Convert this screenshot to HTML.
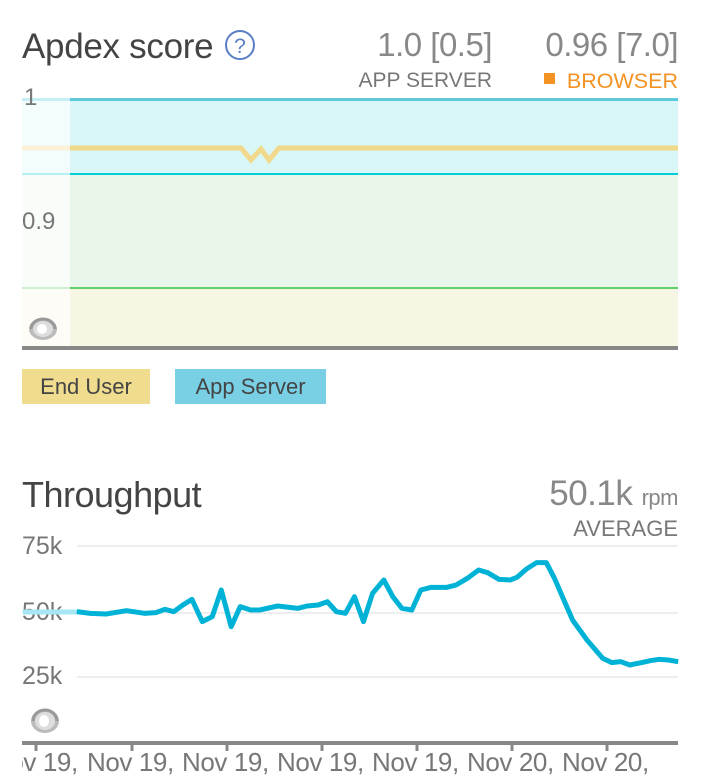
<!DOCTYPE html>
<html><head><meta charset="utf-8"><style>
body{margin:0;width:708px;height:778px;background:#fff;font-family:"Liberation Sans",sans-serif;position:relative;overflow:hidden}
.a{position:absolute;white-space:nowrap}
</style></head><body>
<div class="a" style="left:22px;top:27px;font-size:35px;color:#444;letter-spacing:-0.3px">Apdex score</div>
<svg class="a" style="left:223px;top:29px" width="34" height="34"><circle cx="17" cy="16" r="14" fill="none" stroke="#5a7fc5" stroke-width="2"/><text x="17" y="24" text-anchor="middle" font-size="21" fill="#5a7fc5" font-family="Liberation Sans">?</text></svg>
<div class="a" style="right:216px;top:26px;font-size:33px;color:#888;letter-spacing:-0.5px">1.0 [0.5]</div>
<div class="a" style="right:30px;top:26px;font-size:33px;color:#888;letter-spacing:-0.5px">0.96 [7.0]</div>
<div class="a" style="right:216px;top:69px;font-size:21px;color:#777">APP SERVER</div>
<div class="a" style="left:544px;top:73px;width:11px;height:11px;background:#f39324"></div>
<div class="a" style="right:30px;top:69px;font-size:21.5px;color:#f39324">BROWSER</div>

<div class="a" style="left:22px;top:99px;width:656px;height:75px;background:#d9f7f7"></div>
<div class="a" style="left:22px;top:174px;width:656px;height:114px;background:#e8f7ea"></div>
<div class="a" style="left:22px;top:288px;width:656px;height:60px;background:#f7f5e4"></div>
<div class="a" style="left:22px;top:97px;width:48px;height:251px;background:rgba(255,255,255,.7)"></div>
<div class="a" style="left:70px;top:98px;width:608px;height:3px;background:#5bc8dc"></div>
<div class="a" style="left:22px;top:98px;width:48px;height:3px;background:#c5eef5"></div>
<div class="a" style="left:70px;top:173px;width:608px;height:2px;background:#00cfd5"></div>
<div class="a" style="left:22px;top:173px;width:48px;height:2px;background:#b5f0f0"></div>
<div class="a" style="left:70px;top:287px;width:608px;height:2px;background:#5fd06a"></div>
<div class="a" style="left:22px;top:287px;width:48px;height:2px;background:#cdefd0"></div>
<div class="a" style="left:22px;top:346px;width:656px;height:4px;background:#888"></div>
<svg class="a" style="left:0;top:0" width="708" height="200"><polyline points="70,148 241,148 251,160 261,149 269,160 279,148 678,148" fill="none" stroke="#f0d98a" stroke-width="5"/><line x1="22" y1="148" x2="70" y2="148" stroke="#faf1d6" stroke-width="5"/></svg>
<div class="a" style="left:24px;top:84px;font-size:24px;color:#777">1</div>
<div class="a" style="left:22px;top:208px;font-size:24px;color:#777">0.9</div>
<svg class="a" style="left:27px;top:316px" width="34" height="26"><ellipse cx="16" cy="13" rx="14" ry="11" fill="#bbb"/><ellipse cx="16" cy="13" rx="10" ry="8" fill="#ddd"/><ellipse cx="15" cy="13" rx="5" ry="5" fill="#fff"/><path d="M4 13a12 10 0 0 1 24 0" fill="none" stroke="#999" stroke-width="3"/></svg>
<div class="a" style="left:22px;top:369px;width:128px;height:35px;background:#f0dc8e;font-size:22px;color:#444;line-height:35px;text-align:center">End User</div>
<div class="a" style="left:175px;top:369px;width:151px;height:35px;background:#79d0e5;font-size:22px;color:#444;line-height:35px;text-align:center">App Server</div>

<div class="a" style="left:22px;top:474px;font-size:36px;color:#444;letter-spacing:-0.5px">Throughput</div>
<div class="a" style="right:30px;top:474px;font-size:35px;color:#888;letter-spacing:-0.5px">50.1k <span style="font-size:22px">rpm</span></div>
<div class="a" style="right:30px;top:516px;font-size:22px;color:#777">AVERAGE</div>
<div class="a" style="left:77px;top:545px;width:601px;height:2px;background:#eee"></div>
<div class="a" style="left:77px;top:612px;width:601px;height:2px;background:#eee"></div>
<div class="a" style="left:77px;top:676px;width:601px;height:2px;background:#eee"></div>
<div class="a" style="left:22px;top:532px;font-size:25px;color:#777">75k</div>
<div class="a" style="left:22px;top:598px;font-size:25px;color:#777">50k</div>
<div class="a" style="left:22px;top:662px;font-size:25px;color:#777">25k</div>
<svg class="a" style="left:0;top:470px" width="708" height="308" viewBox="0 0 1568 924" preserveAspectRatio="none">
<line x1="50" y1="426" x2="170" y2="426" stroke="#a9e6f3" stroke-width="5" vector-effect="non-scaling-stroke"/>
<polyline fill="none" stroke="#00b3d6" stroke-width="5" stroke-linejoin="round" vector-effect="non-scaling-stroke" points="170,425 200,430 235,432 280,422 320,430 345,428 365,418 385,425 405,405 425,388 448,455 470,440 490,360 512,470 532,410 555,420 575,420 615,408 660,415 680,408 705,405 725,395 745,425 765,430 785,380 805,455 825,370 850,330 870,380 890,415 912,420 932,360 955,352 990,352 1010,345 1035,325 1060,300 1080,308 1105,328 1130,330 1145,322 1165,298 1188,278 1210,278 1228,325 1268,450 1300,510 1335,565 1355,578 1375,575 1395,585 1420,578 1440,572 1460,568 1480,570 1502,575"/>
</svg>
<svg class="a" style="left:29px;top:707px" width="34" height="28"><ellipse cx="16" cy="14" rx="14" ry="12" fill="#bbb"/><ellipse cx="16" cy="14" rx="10" ry="9" fill="#ddd"/><ellipse cx="15" cy="14" rx="5" ry="6" fill="#fff"/><path d="M4 14a12 11 0 0 1 24 0" fill="none" stroke="#999" stroke-width="3"/></svg>
<div class="a" style="left:22px;top:741px;width:656px;height:4px;background:#888"></div>
<svg class="a" style="left:0;top:744px" width="708" height="8"><g stroke="#888" stroke-width="3"><line x1="36" y1="0" x2="36" y2="7"/><line x1="132" y1="0" x2="132" y2="7"/><line x1="227" y1="0" x2="227" y2="7"/><line x1="322" y1="0" x2="322" y2="7"/><line x1="417" y1="0" x2="417" y2="7"/><line x1="512" y1="0" x2="512" y2="7"/><line x1="607" y1="0" x2="607" y2="7"/></g></svg>
<div class="a" style="left:22px;top:747px;width:656px;height:31px;overflow:hidden;font-size:26px;color:#777;letter-spacing:-0.4px">
<div class="a" style="left:-31px;top:0">Nov 19,</div>
<div class="a" style="left:65px;top:0">Nov 19,</div>
<div class="a" style="left:160px;top:0">Nov 19,</div>
<div class="a" style="left:255px;top:0">Nov 19,</div>
<div class="a" style="left:350px;top:0">Nov 19,</div>
<div class="a" style="left:445px;top:0">Nov 20,</div>
<div class="a" style="left:540px;top:0">Nov 20,</div>
</div>
</body></html>
